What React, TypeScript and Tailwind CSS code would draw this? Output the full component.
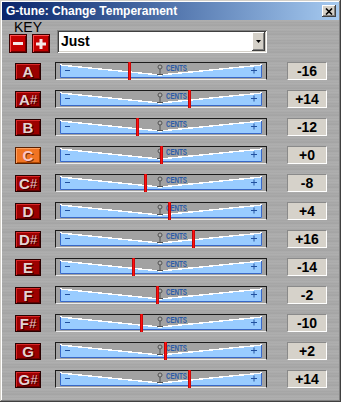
import React from 'react';

const notes = [
  { name: 'A', v: -16 },
  { name: 'A#', v: 14 },
  { name: 'B', v: -12 },
  { name: 'C', v: 0, active: true },
  { name: 'C#', v: -8 },
  { name: 'D', v: 4 },
  { name: 'D#', v: 16 },
  { name: 'E', v: -14 },
  { name: 'F', v: -2 },
  { name: 'F#', v: -10 },
  { name: 'G', v: 2 },
  { name: 'G#', v: 14 },
];

function NoteButton({ name, active }: { name: string; active?: boolean }) {
  const base = name[0];
  const sharp = name.length > 1;
  return (
    <div
      className={
        active
          ? 'w-[26px] h-[17px] flex items-center justify-center border border-[#5a2000] bg-[#f07424] shadow-[inset_1px_1px_0_#ffa060,inset_-1px_-1px_0_#b04800] text-[#f8c8c8] font-bold text-[15px] leading-none [text-shadow:1px_1px_0_#803010]'
          : 'w-[26px] h-[17px] flex items-center justify-center border border-[#2a0000] bg-[#9c0000] shadow-[inset_1px_1px_0_#d82828,inset_-1px_-1px_0_#600000] text-[#e4d4d4] font-bold text-[15px] leading-none [text-shadow:1px_1px_0_#400000]'
      }
    >
      <span>{base}</span>
      {sharp && <span className="italic font-normal text-[13px] text-[#e0c8c8]">#</span>}
    </div>
  );
}

function Slider({ v }: { v: number }) {
  return (
    <div className="relative w-[212px] h-[18px] border border-[#1c1c1c] border-b-[#ececec] bg-[#a2a2a2] pl-[4px] pt-[1px]">
      <svg width="202" height="14" viewBox="0 0 202 14" className="block">
        <polygon points="0,1 100,11 202,1 202,14 0,14" fill="#99ccff" />
        <polyline
          points="0,1 100,11 202,1"
          fill="none"
          stroke="#ffffff"
          strokeWidth="1.4"
          shapeRendering="crispEdges"
        />
        <path d="M0.5 1V13.5H201.5V1" fill="none" stroke="#3868c8" strokeWidth="1" />
        <rect x="5" y="6" width="5" height="1" fill="#2050a0" />
        <rect x="191" y="6" width="6" height="1" fill="#2050a0" />
        <rect x="193.5" y="3.5" width="1" height="6" fill="#2050a0" />
        <circle cx="100" cy="3" r="2" fill="#b0b0b0" stroke="#505050" strokeWidth="1" />
        <rect x="99.5" y="5" width="1" height="5" fill="#505050" />
        <rect x="97" y="10" width="6" height="1" fill="#505050" />
        <text
          x="106"
          y="7"
          fontSize="8.5"
          fontWeight="bold"
          fill="#2c5ca8"
          textLength="21"
          lengthAdjust="spacingAndGlyphs"
          fontFamily="Liberation Sans, Arial, sans-serif"
        >
          CENTS
        </text>
      </svg>
      <div
        className="absolute top-[-1px] w-[3px] h-[18px] bg-[linear-gradient(90deg,#a00000,#ff1010,#b80000)]"
        style={{ left: 104 + 2 * v }}
      />
    </div>
  );
}

export default function App() {
  return (
    <div className="w-[341px] h-[402px] bg-[#d4d0c8] p-[2px] shadow-[inset_-1px_-1px_0_#404040,inset_1px_1px_0_#d4d0c8,inset_-2px_-2px_0_#808080,inset_2px_2px_0_#ffffff] flex flex-col font-['Liberation_Sans',Arial,sans-serif]">
      <div className="h-[18px] flex items-center justify-between pl-[4px] pr-[3px] bg-gradient-to-r from-[#0a246a] to-[#a6caf0]">
        <span className="text-white font-bold text-[12px] leading-none">G-tune: Change Temperament</span>
        <div className="w-[14px] h-[12px] bg-[#d4d0c8] shadow-[inset_-1px_-1px_0_#404040,inset_1px_1px_0_#ffffff,inset_-2px_-2px_0_#808080] flex items-center justify-center">
          <svg width="8" height="7" viewBox="0 0 8 7">
            <path d="M1 0.5L7 6.5M7 0.5L1 6.5" stroke="#000" strokeWidth="1.6" />
          </svg>
        </div>
      </div>

      <div className="flex-1 flex flex-col bg-[repeating-linear-gradient(180deg,#aaaaaa_0px,#b3b3b3_1px,#a4a4a4_2px,#acacac_4px,#a1a1a1_5px,#afafaf_7px,#a8a8a8_9px)]">
        <div className="flex items-end pt-[1px] pl-[7px]">
          <div className="flex flex-col">
            <span className="pl-[5px] text-[14px] leading-[13px] text-black">KEY</span>
            <div className="flex gap-[5px] mt-0">
              <div className="w-[18px] h-[19px] bg-[#c40000] border border-[#3a0000] shadow-[inset_1px_1px_0_#ff5050,inset_-1px_-1px_0_#700000] flex items-center justify-center">
                <svg width="10" height="3" viewBox="0 0 10 3">
                  <rect width="10" height="3" fill="#f4e8e8" />
                </svg>
              </div>
              <div className="w-[18px] h-[19px] bg-[#c40000] border border-[#3a0000] shadow-[inset_1px_1px_0_#ff5050,inset_-1px_-1px_0_#700000] flex items-center justify-center">
                <svg width="10" height="10" viewBox="0 0 10 10">
                  <rect y="3.5" width="10" height="3" fill="#f4e8e8" />
                  <rect x="3.5" width="3" height="10" fill="#f4e8e8" />
                </svg>
              </div>
            </div>
          </div>
          <div className="ml-[7px] w-[210px] h-[23px] bg-white p-[2px] flex shadow-[inset_1px_1px_0_#808080,inset_-1px_-1px_0_#ffffff,inset_2px_2px_0_#404040,inset_-2px_-2px_0_#d4d0c8]">
            <span className="flex-1 pl-[2px] font-bold text-[14px] leading-[19px] text-black">Just</span>
            <div className="w-[13px] bg-[#d4d0c8] shadow-[inset_-1px_-1px_0_#404040,inset_1px_1px_0_#ffffff,inset_-2px_-2px_0_#808080] flex items-center justify-center">
              <svg width="5" height="3" viewBox="0 0 5 3">
                <path d="M0 0H5L2.5 3Z" fill="#000" />
              </svg>
            </div>
          </div>
        </div>

        <div className="mt-[4px] flex flex-col">
          {notes.map((n) => (
            <div key={n.name} className="h-[28px] flex items-center pl-[13px]">
              <NoteButton name={n.name} active={n.active} />
              <div className="ml-[14px]">
                <Slider v={n.v} />
              </div>
              <div className="ml-[20px] w-[40px] h-[18px] bg-[#d6d2ca] border border-[#8a8a8a] border-b-white border-r-white flex items-center justify-center font-bold text-[14px] text-black leading-none">
                {n.v > 0 ? `+${n.v}` : n.v === 0 ? '+0' : `${n.v}`}
              </div>
            </div>
          ))}
        </div>
      </div>
    </div>
  );
}
